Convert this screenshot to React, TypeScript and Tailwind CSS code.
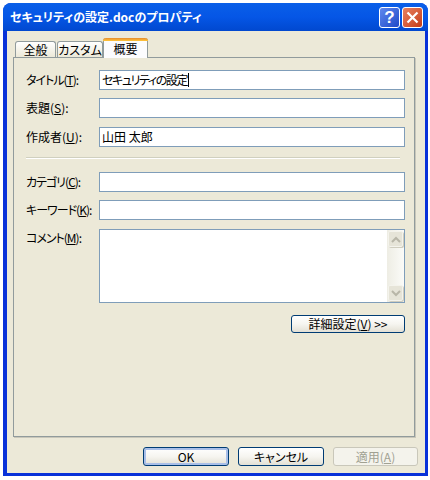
function Label({ text, accel, kana }: { text: string; accel: string; kana?: boolean }) {
  return (
    <label className={`w-[73px] shrink-0 whitespace-nowrap text-[12px] leading-[18px] text-black ${kana ? 'tracking-[-1px]' : ''}`}>
      {text}(<u>{accel}</u>):
    </label>
  );
}

function Field({ text, accel, value, caret, kana, className }: { text: string; accel: string; value?: string; caret?: boolean; kana?: boolean; className?: string }) {
  return (
    <div className={`flex items-center ${className ?? ''}`}>
      <Label text={text} accel={accel} kana={kana} />
      <div className={`flex h-[20px] w-[306px] items-center border border-[#7f9db9] bg-white pl-[2px] text-[12px] leading-none text-black ${caret ? 'tracking-[-1.4px]' : ''}`}>
        {value}
        {caret && <span className="ml-[1px] h-[14px] w-[1px] bg-black" />}
      </div>
    </div>
  );
}

function ScrollButton({ up }: { up?: boolean }) {
  return (
    <div className="flex h-[16px] w-[15px] items-center justify-center rounded-[2px] border border-[#f4f3ec] bg-[#e6e4d8] shadow-[1px_1px_0_#cfcdbf]">
      <svg width="10" height="7" viewBox="0 0 10 7" fill="none" stroke="#b8b6a8" strokeWidth="2">
        <path d={up ? 'M1 6l4-4 4 4' : 'M1 1l4 4 4-4'} />
      </svg>
    </div>
  );
}

function Button({ children, className }: { children: React.ReactNode; className?: string }) {
  return (
    <button
      type="button"
      className={`flex shrink-0 items-center justify-center rounded-[3px] border border-[#003c74] bg-gradient-to-b from-white via-[#f6f5f0] to-[#e3e0d5] text-[12px] leading-none text-black ${className ?? ''}`}
    >
      {children}
    </button>
  );
}

export default function App() {
  return (
    <div className="h-[480px] w-[430px] bg-white pl-[3px] pt-[3px] font-['Noto_Sans_CJK_JP','Liberation_Sans',sans-serif] [font-feature-settings:'palt']">
      <div className="flex h-[473px] w-[425px] flex-col overflow-hidden rounded-t-[8px] bg-[#0831d9]">
        {/* Title bar */}
        <div className="flex h-[28px] shrink-0 items-center justify-between bg-gradient-to-b from-[#0a5fe8] via-[#0556e6] to-[#0148cf] pl-[7px] pr-[5px]">
          <span className="text-[12px] font-bold leading-none text-white">セキュリティの設定.docのプロパティ</span>
          <div className="flex gap-[2px]">
            <div className="flex h-[21px] w-[21px] items-center justify-center rounded-[3px] border border-white bg-gradient-to-br from-[#5f88ee] to-[#2048c8] font-['Liberation_Sans',sans-serif] text-[17px] font-bold leading-none text-white">
              ?
            </div>
            <div className="flex h-[21px] w-[21px] items-center justify-center rounded-[3px] border border-white bg-gradient-to-br from-[#e8805f] to-[#c43a12]">
              <svg width="13" height="13" viewBox="0 0 13 13" stroke="white" strokeWidth="2.2">
                <path d="M1.5 1.5l10 10M11.5 1.5l-10 10" />
              </svg>
            </div>
          </div>
        </div>

        {/* Client area */}
        <div className="mb-[3px] ml-[4px] mr-[3px] flex-1 bg-[#ece9d8] pl-[6px] pr-[10px] pt-[7px]">
          {/* Tabs */}
          <div className="relative z-10 flex h-[19px] items-start pl-[2px] pt-[3px] text-[12px] leading-none text-black">
            <div className="flex h-[16px] w-[41px] items-center justify-center whitespace-nowrap rounded-t-[3px] border border-b-0 border-[#919b9c] bg-gradient-to-b from-white to-[#ece9d8]">全般</div>
            <div className="ml-[1px] flex h-[16px] w-[46px] items-center justify-center whitespace-nowrap rounded-t-[3px] border border-b-0 border-[#919b9c] bg-gradient-to-b from-white to-[#ece9d8]">カスタム</div>
            <div className="-mt-[3px] flex h-[20px] w-[45px] flex-col rounded-t-[3px] border-x border-[#919b9c] bg-[#fcfcfe]">
              <div className="-mx-[1px] h-[3px] shrink-0 rounded-t-[3px] bg-gradient-to-b from-[#e68b2c] to-[#ffc73c]" />
              <div className="flex flex-1 items-center justify-center pb-[2px]">概要</div>
            </div>
          </div>

          {/* Panel */}
          <div className="flex h-[380px] w-[402px] flex-col border border-[#919b9c] bg-[#ece9d8] pl-[12px] pt-[12px] shadow-[1px_1px_0_#c9c7ba]">
            <Field text="タイトル" accel="T" value="セキュリティの設定" caret kana />
            <Field text="表題" accel="S" className="mt-[8px]" />
            <Field text="作成者" accel="U" value="山田 太郎" className="mt-[9px]" />

            <div className="mb-[13px] mt-[10px] h-[2px] w-[374px] border-t border-[#d0d0bf] bg-white" />

            <Field text="カテゴリ" accel="C" kana />
            <Field text="キーワード" accel="K" kana className="mt-[8px]" />

            <div className="mt-[9px] flex">
              <Label text="コメント" accel="M" kana />
              <div className="flex h-[74px] w-[306px] justify-end border border-[#7f9db9] bg-white">
                <div className="flex w-[17px] flex-col justify-between bg-gradient-to-r from-[#eeede4] to-[#fbfbf8] py-[1px] pl-[1px]">
                  <ScrollButton up />
                  <ScrollButton />
                </div>
              </div>
            </div>

            <div className="mt-[12px] flex w-[379px] justify-end">
              <Button className="h-[18px] w-[114px]">
                詳細設定(<u>V</u>) &gt;&gt;
              </Button>
            </div>
          </div>

          {/* Dialog buttons */}
          <div className="mt-[10px] flex pl-[130px]">
            <Button className="h-[19px] w-[86px] shadow-[inset_0_0_0_2px_#a9bfe8]">OK</Button>
            <Button className="ml-[9px] h-[19px] w-[86px]">キャンセル</Button>
            <div className="ml-[9px] flex h-[19px] w-[85px] shrink-0 items-center justify-center rounded-[3px] border border-[#c9c7ba] bg-[#f4f3ec] text-[12px] leading-none text-[#a1a192]">
              適用(<u>A</u>)
            </div>
          </div>
        </div>
      </div>
    </div>
  );
}
